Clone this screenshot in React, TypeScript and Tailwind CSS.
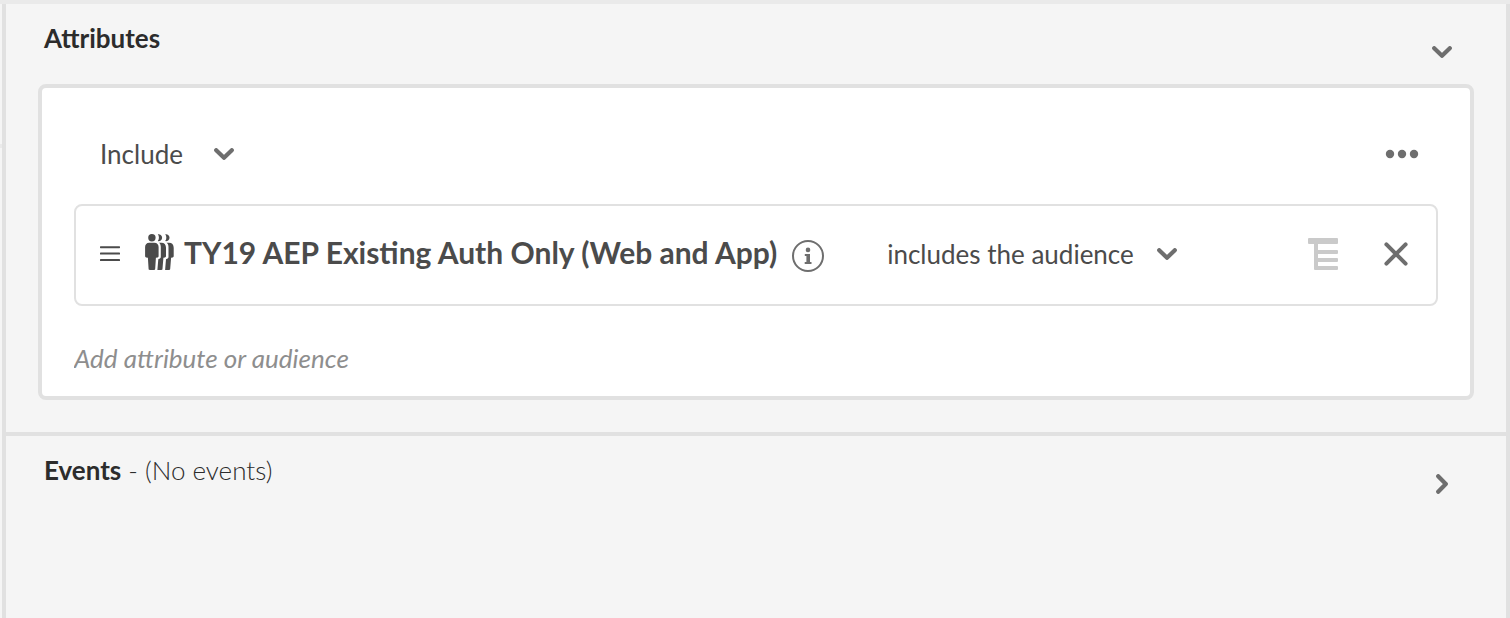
import type { ReactNode } from "react";

function ChevronDown({ className = "" }: { className?: string }) {
  return (
    <svg viewBox="0 0 20 12" className={`h-3 w-5 shrink-0 ${className}`} fill="none" stroke="#6e6e6e" strokeWidth="4.2" strokeLinecap="round" strokeLinejoin="round" aria-hidden="true">
      <path d="M2.2 2.2 10 9.8l7.8-7.6" />
    </svg>
  );
}

function ChevronRight() {
  return (
    <svg viewBox="0 0 12 20" className="h-5 w-3" fill="none" stroke="#6e6e6e" strokeWidth="4.2" strokeLinecap="round" strokeLinejoin="round" aria-hidden="true">
      <path d="M2.2 2.2 9.8 10l-7.6 7.8" />
    </svg>
  );
}

function DragHandle() {
  return (
    <svg viewBox="0 0 20 16" className="h-4 w-5" fill="#4b4b4b" aria-hidden="true">
      <rect y="0.2" width="20" height="2" rx="0.6" />
      <rect y="6.6" width="20" height="2" rx="0.6" />
      <rect y="13" width="20" height="2" rx="0.6" />
    </svg>
  );
}

function PeopleIcon() {
  return (
    <svg viewBox="0 0 30 36" className="h-9 w-[30px] shrink-0" fill="#4b4b4b" aria-hidden="true">
      <circle cx="6.9" cy="3.7" r="3.7" />
      <path d="M4.2 8.8h5.2c2.6 0 4.2 1.7 4.2 4.2v9.2c0 .7-.4 1.1-1 1.2l-1.7.3-.7 11c0 .8-.4 1.2-1.1 1.2H4.7c-.7 0-1.1-.4-1.1-1.2l-.7-11-1.8-.3c-.6-.1-1-.5-1-1.2V13c0-2.5 1.6-4.2 4.1-4.2Z" />
      <path d="M12.8.3a3.5 3.5 0 1 1 0 6.8c1.5-1.9 1.5-4.9 0-6.8Z" />
      <path d="M20.2.3a3.5 3.5 0 1 1 0 6.8c1.5-1.9 1.5-4.9 0-6.8Z" />
      <path d="M14 8.8h2.3c3 0 4.7 1.9 4.7 5v8.4c0 .7-.4 1.1-1.1 1.2l-1.5.3-.9 11c0 .8-.4 1.2-1.1 1.2h-4l.9-10.7 1.1-.4c.9-.3 1.4-1 1.4-2V13c0-1.7-.5-3.2-1.8-4.2Z" />
      <path d="M21.6 8.8h2.4c3 0 4.7 1.9 4.7 5v8.4c0 .7-.4 1.1-1.1 1.2l-1.5.3-.9 11c0 .8-.4 1.2-1.1 1.2h-4l.9-10.7 1.1-.4c.9-.3 1.4-1 1.4-2V13c0-1.7-.6-3.2-1.9-4.2Z" />
    </svg>
  );
}

function InfoIcon() {
  return (
    <svg viewBox="0 0 32 32" className="size-8" aria-hidden="true">
      <circle cx="16" cy="16" r="15" fill="none" stroke="#6e6e6e" strokeWidth="2" />
      <circle cx="16" cy="9.9" r="2.3" fill="#6e6e6e" />
      <path d="M12.8 14h5.2v8h1.5v2h-6.8v-2h1.7v-6h-1.6Z" fill="#6e6e6e" />
    </svg>
  );
}

function TreeIcon() {
  return (
    <svg viewBox="0 0 30 32" className="h-8 w-[30px]" fill="#cacaca" aria-hidden="true">
      <rect width="30" height="6" rx="1" />
      <path d="M6 5h4v7h19a1 1 0 0 1 1 1v2a1 1 0 0 1-1 1H10v4h19a1 1 0 0 1 1 1v2a1 1 0 0 1-1 1H10v4h19a1 1 0 0 1 1 1v2a1 1 0 0 1-1 1H7a1 1 0 0 1-1-1Z" />
    </svg>
  );
}

function CrossIcon() {
  return (
    <svg viewBox="0 0 24 24" className="size-6" fill="none" stroke="#6e6e6e" strokeWidth="4" strokeLinecap="round" aria-hidden="true">
      <path d="M2.4 2.4l19.2 19.2M21.6 2.4 2.4 21.6" />
    </svg>
  );
}

function MoreIcon() {
  return (
    <svg viewBox="0 0 34 10" className="h-[10px] w-[34px]" fill="#6e6e6e" aria-hidden="true">
      <circle cx="5" cy="5" r="4.2" />
      <circle cx="17" cy="5" r="4.2" />
      <circle cx="29" cy="5" r="4.2" />
    </svg>
  );
}

function Picker({ label, options, className }: { label: string; options: string[]; className: string }) {
  return (
    <div className="flex items-center">
      <select aria-label={label} className={`h-9 appearance-none bg-transparent text-[26px] leading-9 text-[#4b4b4b] ${className}`}>
        {options.map((option) => (
          <option key={option}>{option}</option>
        ))}
      </select>
      <ChevronDown className="pointer-events-none -ml-5" />
    </div>
  );
}

function SectionHeader({ title, note, action, icon }: { title: string; note?: string; action: string; icon: ReactNode }) {
  return (
    <header className="flex h-20 items-start justify-between pt-[18px] pr-12 pl-[38px] text-[#2c2c2c]">
      <h2 className="text-[26px] leading-8 font-bold">
        {title}
        {note && <span className="font-light"> {note}</span>}
      </h2>
      <button type="button" aria-label={action} className="mt-[14px] flex size-8 items-center justify-center">
        {icon}
      </button>
    </header>
  );
}

export default function App() {
  return (
    <div className="flex min-h-screen border-t-4 border-[#eaeaea] bg-[#f5f5f5] font-['Lato','Liberation_Sans',sans-serif]">
      <div className="w-[2px] pt-[140px]">
        <div className="h-1 bg-[#eaeaea]" />
      </div>
      <main className="min-w-0 grow border-x-4 border-[#e1e1e1]">
        <section className="border-b-4 border-[#e1e1e1] pb-8">
          <SectionHeader title="Attributes" action="Collapse attributes" icon={<ChevronDown />} />
          <div className="mx-8 rounded-lg border-4 border-[#e1e1e1] bg-white px-8 pt-12 pb-5">
            <div className="flex h-9 items-center justify-between pr-[19px] pl-[26px]">
              <Picker label="Rule type" options={["Include", "Exclude"]} className="w-[134px]" />
              <button type="button" aria-label="More options">
                <MoreIcon />
              </button>
            </div>

            <div className="mt-8 flex h-[102px] items-center rounded-lg border-2 border-[#e1e1e1] pr-7 pb-[2px] pl-6">
              <button type="button" aria-label="Reorder" className="mr-[25px]">
                <DragHandle />
              </button>
              <div className="flex items-center gap-[9px] pb-1">
                <PeopleIcon />
                <h3 className="text-[30px] leading-9 font-bold whitespace-nowrap text-[#4b4b4b]">
                  TY19 AEP Existing Auth Only (Web and App)
                </h3>
              </div>
              <button type="button" aria-label="Audience details" className="mt-1 mr-[63px] ml-[15px]">
                <InfoIcon />
              </button>
              <Picker label="Condition" options={["includes the audience"]} className="w-[290px]" />
              <div className="ml-auto flex items-center gap-[46px]">
                <button type="button" aria-label="Show hierarchy">
                  <TreeIcon />
                </button>
                <button type="button" aria-label="Remove audience">
                  <CrossIcon />
                </button>
              </div>
            </div>

            <input
              type="text"
              aria-label="Add attribute or audience"
              placeholder="Add attribute or audience"
              className="mt-[34px] block h-9 w-full bg-transparent text-[26px] leading-9 italic outline-none placeholder:text-[#8e8e8e]"
            />
          </div>
        </section>

        <section>
          <SectionHeader title="Events" note="- (No events)" action="Expand events" icon={<ChevronRight />} />
        </section>
      </main>
    </div>
  );
}
